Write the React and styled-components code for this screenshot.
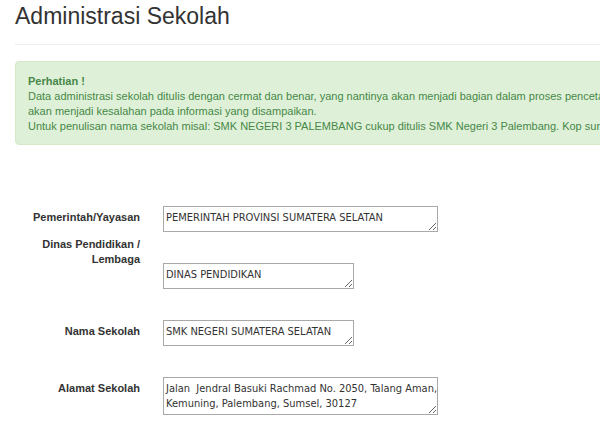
import React from 'react'
import styled, { createGlobalStyle } from 'styled-components'

const GlobalStyle = createGlobalStyle`
  html, body {
    margin: 0;
    padding: 0;
    background: #fff;
    overflow: hidden;
  }
  body {
    font-family: "Liberation Sans", Arial, sans-serif;
    color: #333;
  }
`

const narrow = `"DejaVu Sans Condensed", "DejaVu Sans", sans-serif`

const Page = styled.div`
  width: 940px;
  padding: 4px 0 0 15px;
`

const Title = styled.h1`
  margin: 0;
  font-size: 23px;
  font-weight: normal;
  line-height: 1.1;
  color: #333;
`

const Divider = styled.div`
  margin-top: 15px;
  border-top: 1px solid #eee;
`

const Alert = styled.div`
  margin-top: 16px;
  padding: 12px 12px 10px;
  background: #dff0d8;
  border: 1px solid #d6e9c6;
  border-radius: 4px;
  color: #468847;
  font-size: 11px;
  line-height: 15px;
`

const AlertLine = styled.div`
  white-space: nowrap;
  font-weight: ${(p) => (p.$strong ? 'bold' : 'normal')};
`

const Form = styled.div`
  margin-top: 61px;
  display: flex;
  flex-direction: column;
  gap: 31px;
`

const Row = styled.div`
  display: grid;
  grid-template-columns: 125px 275px;
  column-gap: 23px;
  align-items: start;
`

const Label = styled.label`
  padding-top: 4px;
  margin-top: ${(p) => (p.$raised ? '-30px' : '0')};
  text-align: right;
  font-size: 11px;
  font-weight: bold;
  line-height: 15px;
  color: #333;
`

const Area = styled.textarea`
  box-sizing: border-box;
  width: ${(p) => (p.$short ? '191px' : '275px')};
  height: ${(p) => p.$h || 26}px;
  margin: 0;
  padding: 3px 2px;
  border: 1px solid #a9a9a9;
  border-radius: 0;
  font-family: ${narrow};
  font-stretch: semi-condensed;
  font-size: 11px;
  line-height: 15px;
  color: #333;
  white-space: pre;
  overflow: hidden;
  resize: both;
  outline: none;
`

const fields = [
  { label: 'Pemerintah/Yayasan', value: 'PEMERINTAH PROVINSI SUMATERA SELATAN' },
  { label: <>Dinas Pendidikan /<br />Lembaga</>, value: 'DINAS PENDIDIKAN', short: true, raised: true },
  { label: 'Nama Sekolah', value: 'SMK NEGERI SUMATERA SELATAN', short: true },
  {
    label: 'Alamat Sekolah',
    value: 'Jalan  Jendral Basuki Rachmad No. 2050, Talang Aman,\nKemuning, Palembang, Sumsel, 30127',
    h: 38,
  },
]

export default function App() {
  return (
    <>
      <GlobalStyle />
      <Page>
        <Title>Administrasi Sekolah</Title>
        <Divider />
        <Alert>
          <AlertLine $strong>Perhatian !</AlertLine>
          <AlertLine>
            Data administrasi sekolah ditulis dengan cermat dan benar, yang nantinya akan menjadi bagian dalam proses pencetakan kop surat, kesalahan penulisan
          </AlertLine>
          <AlertLine>akan menjadi kesalahan pada informasi yang disampaikan.</AlertLine>
          <AlertLine>
            Untuk penulisan nama sekolah misal: SMK NEGERI 3 PALEMBANG cukup ditulis SMK Negeri 3 Palembang. Kop surat akan otomatis menyesuaikan.
          </AlertLine>
        </Alert>
        <Form>
          {fields.map((f, i) => (
            <Row key={i}>
              <Label $raised={f.raised}>{f.label}</Label>
              <Area $short={f.short} $h={f.h} defaultValue={f.value} />
            </Row>
          ))}
        </Form>
      </Page>
    </>
  )
}
